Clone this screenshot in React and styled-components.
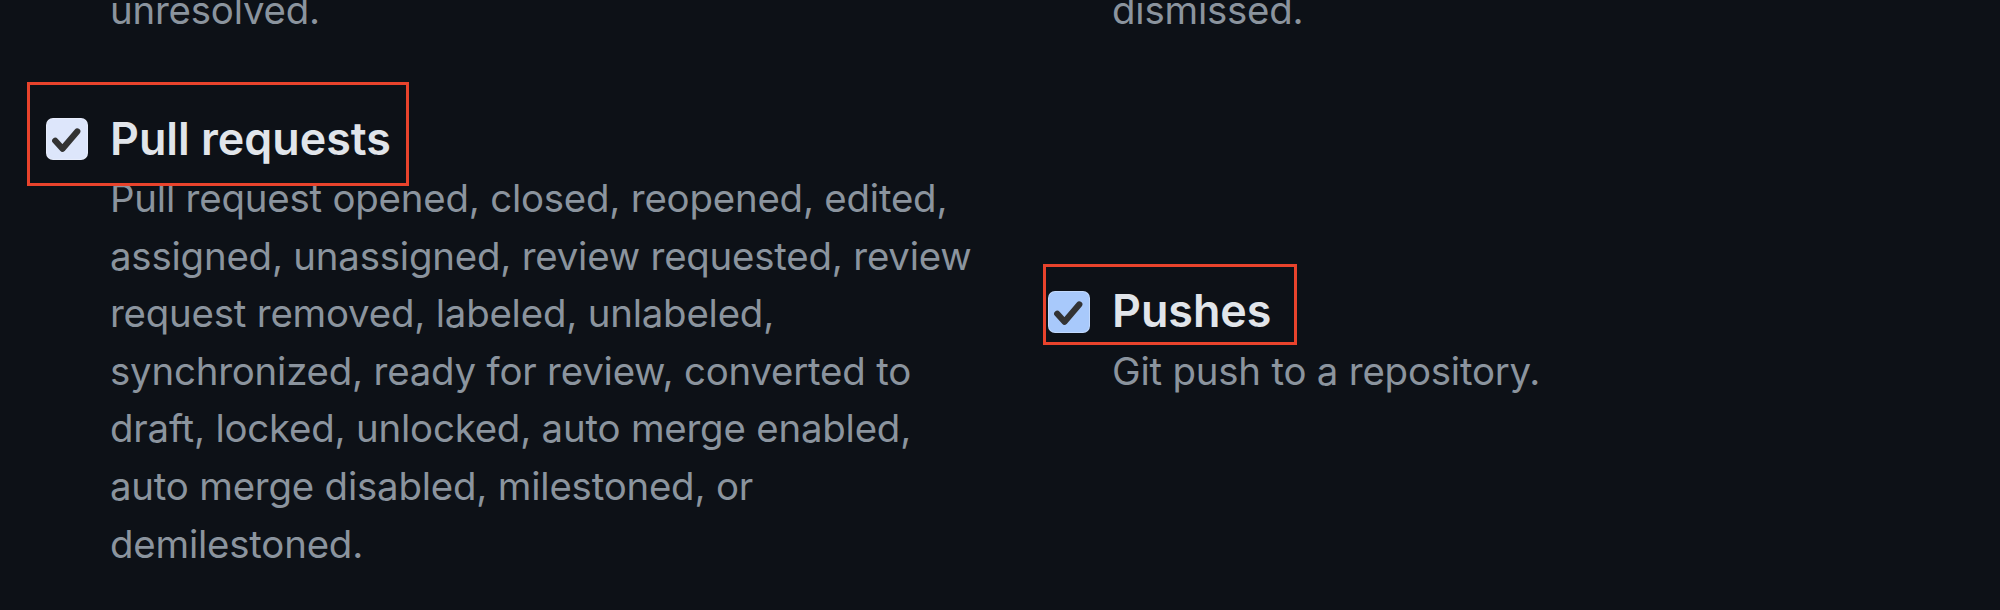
import styled, { createGlobalStyle } from "styled-components";

const GlobalStyle = createGlobalStyle`
  html, body {
    margin: 0;
    padding: 0;
    background: #0d1117;
  }
  body {
    height: 610px;
    overflow: hidden;
    font-family: Inter, "Noto Sans", "Liberation Sans", sans-serif;
  }
`;

const CheckMark = () => (
  <svg width="100%" height="100%" viewBox="0 0 16 16">
    <path
      d="M3.3 8.7 L6.2 11.9 L12.1 5"
      fill="none"
      stroke="#333"
      strokeWidth="2.5"
      strokeLinecap="round"
      strokeLinejoin="round"
    />
  </svg>
);

const events = [
  {
    title: "Pull requests",
    note:
      "Pull request opened, closed, reopened, edited, assigned, unassigned, review requested, review request removed, labeled, unlabeled, synchronized, ready for review, converted to draft, locked, unlocked, auto merge enabled, auto merge disabled, milestoned, or demilestoned.",
    box: "#dde6fb",
    mark: { top: -35, right: -18, bottom: -25, left: -19 },
  },
  {
    title: "Pushes",
    note: "Git push to a repository.",
    box: "#a8c9fb",
    mark: { top: -25, right: -26, bottom: -11, left: -5 },
  },
];

const App = () => {
  return (
    <Page>
      <GlobalStyle />
      <Grid>
        <Item>
          <Note $first>unresolved.</Note>
        </Item>
        <Item>
          <Note $first>dismissed.</Note>
        </Item>
        {events.map((ev) => (
          <Item key={ev.title}>
            <Label>
              <Checkbox $bg={ev.box}>
                <CheckMark />
              </Checkbox>
              <Title>{ev.title}</Title>
              <Highlight $inset={ev.mark} />
            </Label>
            <Note>{ev.note}</Note>
          </Item>
        ))}
      </Grid>
    </Page>
  );
};

const Page = styled.div`
  width: 2000px;
  height: 610px;
  background: #0d1117;
  overflow: hidden;
`;

const Grid = styled.div`
  display: grid;
  grid-template-columns: 1002px 940px;
  align-items: center;
  row-gap: 75px;
  margin-top: -18px;
  padding-left: 46px;
`;

const Item = styled.div`
  padding-left: 64px;
  width: 880px;
`;

const Label = styled.label`
  position: relative;
  display: inline-flex;
  align-items: center;
  gap: 22px;
  margin-top: 2px;
  margin-left: -64px;
`;

const Checkbox = styled.span`
  display: flex;
  width: 42px;
  height: 42px;
  box-sizing: border-box;
  border-radius: 7px;
  background: ${(p) => p.$bg};
  border: 1px solid rgba(255, 255, 255, 0.3);
`;

const Title = styled.span`
  font-size: 44.8px;
  line-height: 44.8px;
  font-weight: 600;
  color: #e1e5ea;
`;

const Highlight = styled.span`
  position: absolute;
  top: ${(p) => p.$inset.top}px;
  right: ${(p) => p.$inset.right}px;
  bottom: ${(p) => p.$inset.bottom}px;
  left: ${(p) => p.$inset.left}px;
  border: 3px solid #e8432c;
  pointer-events: none;
`;

const Note = styled.div`
  margin-top: ${(p) => (p.$first ? "0" : "7px")};
  font-size: 38.4px;
  line-height: 57.6px;
  letter-spacing: -0.2px;
  color: #8b949e;
`;

export default App;
